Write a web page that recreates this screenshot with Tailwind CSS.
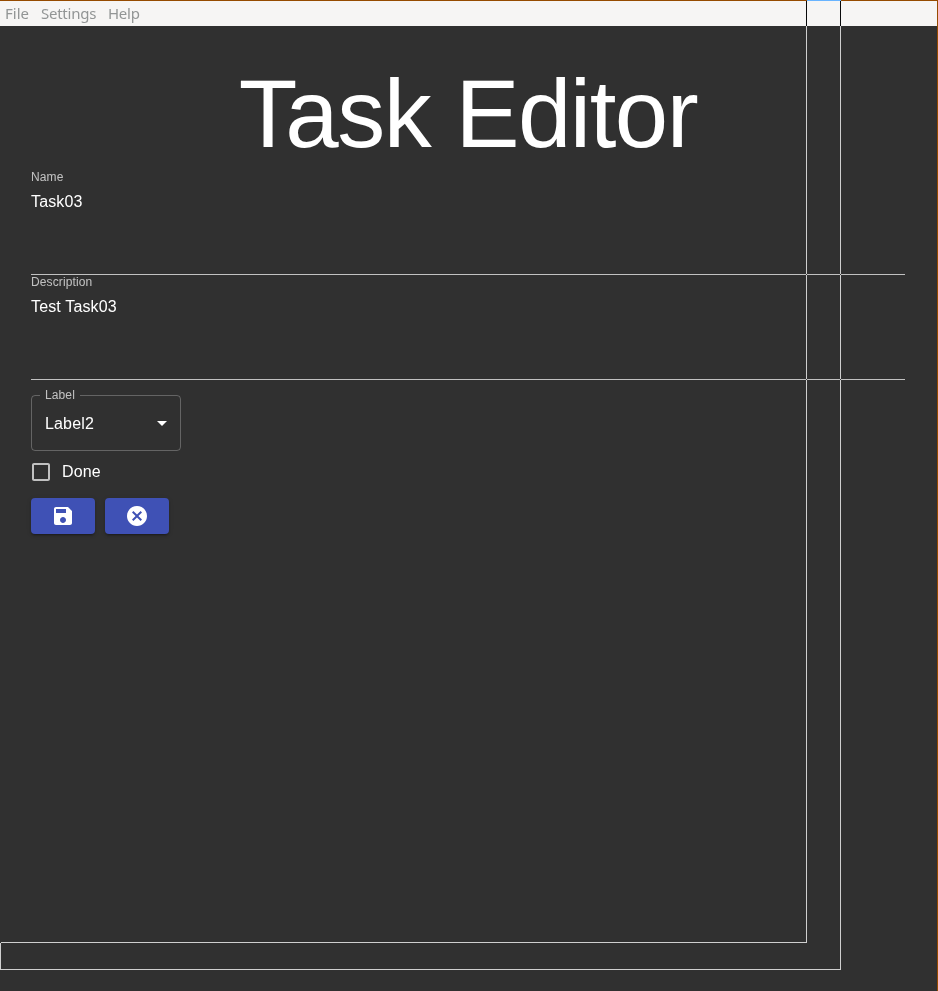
<!DOCTYPE html>
<html lang="en">
<head>
<meta charset="utf-8">
<title>Task Editor</title>
<script src="https://cdn.jsdelivr.net/npm/@tailwindcss/browser@4"></script>
</head>
<body class="bg-[#303030]">
<div class="relative isolate h-[991px] w-[938px] bg-[#303030] text-base text-white font-['Liberation_Sans',Arial,sans-serif]">
 <div class="h-full border-t border-r border-[#964b00]">
  <nav class="flex h-[25px] items-center gap-3 bg-[#f6f5f4] pl-[5px] font-['Noto_Sans',sans-serif] text-[15px] leading-[25px] text-[#929595]">
    <span>File</span><span class="w-[55px] tracking-[-0.25px]">Settings</span><span class="tracking-[-0.25px]">Help</span>
  </nav>
  <main class="pl-[31px] pr-8 pt-8">
    <h1 class="h-28 text-center text-[96px] font-light leading-[112px] tracking-[-0.01562em]">Task Editor</h1>
    <div class="flex h-[105px] flex-col border-b border-[#c1c1c1]">
      <label class="text-xs leading-[14px] tracking-[0.00938em] text-white/70">Name</label>
      <span class="mt-2 leading-[19px] tracking-[0.00938em]">Task03</span>
    </div>
    <div class="flex h-[105px] flex-col border-b border-[#c1c1c1]">
      <label class="text-xs leading-[14px] tracking-[0.00938em] text-white/70">Description</label>
      <span class="mt-2 leading-[19px] tracking-[0.00938em]">Test Task03</span>
    </div>
    <fieldset class="mt-2 h-[63px] w-[150px] rounded border border-white/25 pl-2">
      <legend class="h-[14px] px-[5px] text-xs leading-[14px] tracking-[0.00938em] text-white/70">Label</legend>
      <div class="flex h-[42px] items-center justify-between pl-[5px] pr-[6px]">
        <span class="leading-[19px] tracking-[0.00938em]">Label2</span>
        <svg class="size-6" viewBox="0 0 24 24" fill="white"><path d="M7 10l5 5 5-5z"/></svg>
      </div>
    </fieldset>
    <div class="mt-[9px] flex h-6 items-center gap-[9px]">
      <svg class="-ml-0.5 size-6" viewBox="0 0 24 24" fill="#c1c1c1"><path d="M19 5v14H5V5h14m0-2H5c-1.100 0-2 .9-2 2v14c0 1.100.9 2 2 2h14c1.100 0 2-.9 2-2V5c0-1.100-.9-2-2-2z"/></svg>
      <span class="leading-6 tracking-[0.00938em]">Done</span>
    </div>
    <div class="mt-[14px] flex gap-[10px]">
      <button aria-label="Save" class="flex h-9 w-16 items-center justify-center rounded bg-[#3f51b5] shadow-[0_3px_1px_-2px_rgba(0,0,0,0.2),0_2px_2px_0_rgba(0,0,0,0.14),0_1px_5px_0_rgba(0,0,0,0.12)]">
        <svg class="size-6" viewBox="0 0 24 24" fill="white"><path d="M17 3H5c-1.110 0-2 .9-2 2v14c0 1.100.89 2 2 2h14c1.100 0 2-.9 2-2V7l-4-4zm-5 16c-1.660 0-3-1.340-3-3s1.340-3 3-3 3 1.340 3 3-1.340 3-3 3zm3-10H5V5h10v4z"/></svg>
      </button>
      <button aria-label="Cancel" class="flex h-9 w-16 items-center justify-center rounded bg-[#3f51b5] shadow-[0_3px_1px_-2px_rgba(0,0,0,0.2),0_2px_2px_0_rgba(0,0,0,0.14),0_1px_5px_0_rgba(0,0,0,0.12)]">
        <svg class="size-6" viewBox="0 0 24 24" fill="white"><path d="M12 2C6.470 2 2 6.470 2 12s4.470 10 10 10 10-4.470 10-10S17.530 2 12 2zm5 13.590L15.590 17 12 13.410 8.410 17 7 15.590 10.590 12 7 8.410 8.410 7 12 10.590 15.590 7 17 8.410 13.410 12 17 15.590z"/></svg>
      </button>
    </div>
  </main>
 </div>
 <!-- Inverting outline drawn over the window -->
 <svg class="pointer-events-none absolute left-0 top-0 h-[991px] w-[938px] mix-blend-difference" viewBox="0 0 938 991" fill="none" stroke="white" shape-rendering="crispEdges"><path d="M1 942.500H806.500V1M807 .5H840.500V969.500H.5V943"/></svg>
</div>
</body>
</html>
